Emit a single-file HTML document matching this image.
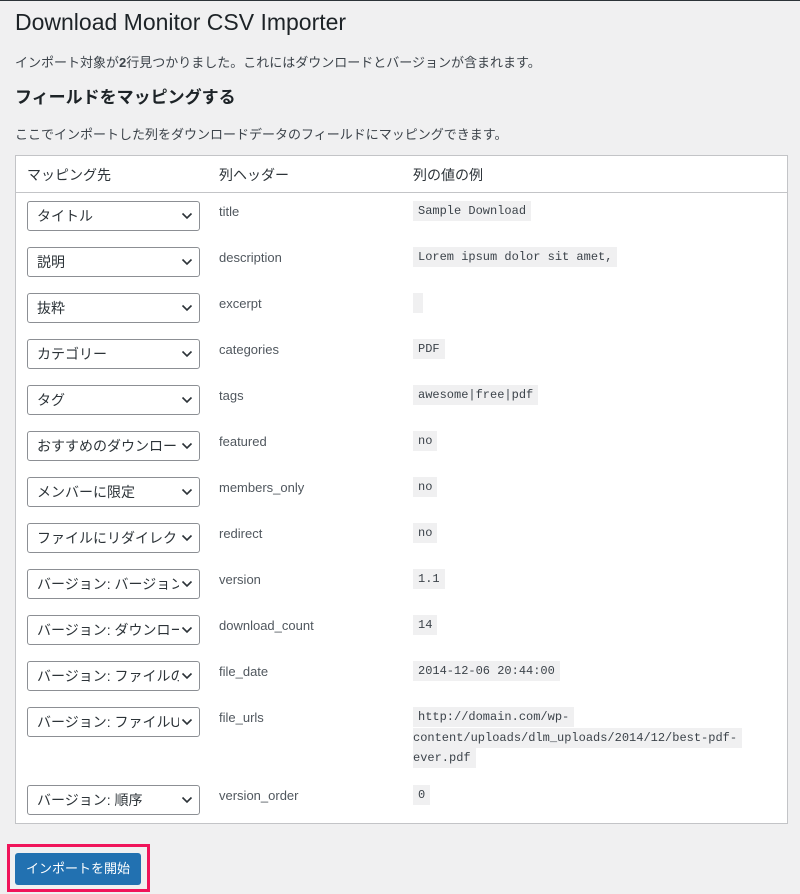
<!DOCTYPE html>
<html><head><meta charset="utf-8"><style>
*{box-sizing:border-box;margin:0;padding:0}
body{width:800px;height:894px;background:#f0f0f1;font-family:"Liberation Sans","Noto Sans CJK JP",sans-serif;color:#1d2327;position:relative;overflow:hidden;border-top:1px solid #2c3338}
.a{position:absolute;white-space:nowrap}
h1{position:absolute;left:15px;top:6px;font-size:23px;font-weight:400;line-height:30px}
.p{font-size:13px;color:#3c434a}
h2{position:absolute;left:15px;top:85px;font-size:17px;font-weight:700;line-height:24px}
.tbl{position:absolute;left:15px;top:154px;width:773px;height:669px;background:#fff;border:1px solid #c3c4c7}
.hd{position:absolute;left:0;top:36px;width:100%;border-top:1px solid #c3c4c7}
.th{font-size:14px;color:#2c3338;top:9px}
.sel{position:absolute;left:11px;width:173px;height:30px;border:1px solid #8c8f94;border-radius:3px;background:#fff;font-size:14px;line-height:28px;padding-left:9px;color:#2c3338;overflow:hidden;white-space:nowrap}
.sel span{display:inline-block;max-width:142px;overflow:hidden}
.sel svg{position:absolute;right:6px;top:10px}
.c2{left:203px;font-size:13px;color:#50575e}
.code{position:absolute;left:397px;font-family:"Liberation Mono","DejaVu Sans Mono",monospace;font-size:12px;background:#f0f0f1;color:#3c434a;padding:0 5px;line-height:20px;white-space:nowrap}
.btn{position:absolute;left:15px;top:852px;width:126px;height:32px;background:#2271b1;border-radius:3px;color:#fff;font-size:13px;line-height:32px;text-align:center}
.hl{position:absolute;left:7px;top:843px;width:143px;height:48px;border:3px solid #f0145a}
</style></head><body>
<h1>Download Monitor CSV Importer</h1>
<div class="a p" style="left:15px;top:51px">インポート対象が<b>2</b>行見つかりました。これにはダウンロードとバージョンが含まれます。</div>
<h2>フィールドをマッピングする</h2>
<div class="a p" style="left:15px;top:123px">ここでインポートした列をダウンロードデータのフィールドにマッピングできます。</div>
<div class="tbl">
<div class="a th" style="left:11px">マッピング先</div>
<div class="a th" style="left:203px">列ヘッダー</div>
<div class="a th" style="left:397px">列の値の例</div>
<div class="hd"></div>
<div id="rows"></div>
</div>
<div class="hl"></div>
<div class="btn">インポートを開始</div>
<script>
var d=[["タイトル","title","Sample Download"],["説明","description","Lorem ipsum dolor sit amet,"],["抜粋","excerpt",""],["カテゴリー","categories","PDF"],["タグ","tags","awesome|free|pdf"],["おすすめのダウンロード","featured","no"],["メンバーに限定","members_only","no"],["ファイルにリダイレクト","redirect","no"],["バージョン: バージョン","version","1.1"],["バージョン: ダウンロード数","download_count","14"],["バージョン: ファイルの日付","file_date","2014-12-06 20:44:00"],["バージョン: ファイルURL","file_urls","URL"],["バージョン: 順序","version_order","0"]];
var h="",arr='<svg width="12" height="8" viewBox="0 0 12 8"><path d="M1.5 1.5L6 6l4.5-4.5" fill="none" stroke="#2c3338" stroke-width="1.6"/></svg>';
d.forEach(function(r,i){var t=(i<12?45+46*i:629);
h+='<div class="sel" style="top:'+t+'px"><span>'+r[0]+'</span>'+arr+'</div>';
h+='<div class="a c2" style="top:'+(t+3)+'px">'+r[1]+'</div>';
if(r[2]=="URL"){h+='<div class="code" style="top:'+t+'px">http://domain.com/wp-</div><div class="code" style="top:'+(t+21)+'px;padding-left:0">content/uploads/dlm_uploads/2014/12/best-pdf-</div><div class="code" style="top:'+(t+41)+'px;padding-left:0">ever.pdf </div>';}
else h+='<div class="code" style="top:'+t+'px;min-width:10px;height:20px">'+r[2]+'</div>';});
document.getElementById("rows").innerHTML=h;
</script>
</body></html>
